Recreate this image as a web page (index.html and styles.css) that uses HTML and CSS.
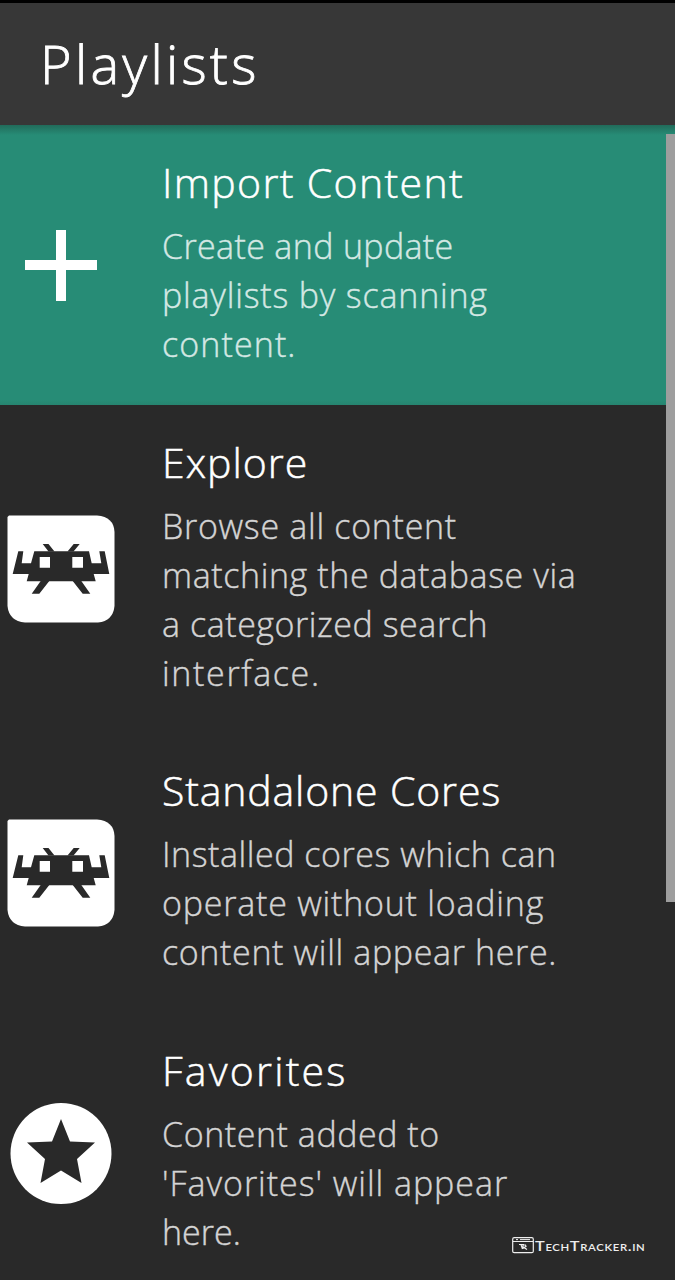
FILE: index.html
```
<!DOCTYPE html>
<html lang="en">
<head>
<meta charset="utf-8">
<title>Playlists</title>
<link rel="stylesheet" href="styles.css">
</head>
<body>
<svg width="0" height="0" class="defs">
  <symbol id="invader" viewBox="0 0 108 108">
    <path fill="#fff" d="M2 .5H90Q107 2 107.500 17V91Q106 106 91 107.500H18Q2 106 .5 91V2Z"/>
    <path fill="#292929" d="M27.300 36.300H82l2.700 12h9.600l-2-12h5.400l4.600 22.700H86.700l2 7.300h-69l2-7.300h-16l5.600-22.700h5l-1.600 12H24z"/>
    <path fill="#292929" d="M33.700 66h8.600l-10 12.700h-7.600zM65.700 66h8.600l9 12.700h-7.600zM35.700 29h5.800l6 7.600h-6zM66.700 29h6l-6.200 7.600h-6z"/>
    <path fill="#fff" d="M32.700 42H43v10.700H32.700zM65.300 42H76v10.700H65.300z"/>
  </symbol>
</svg>
<div class="screen">
  <header class="header"><h1>Playlists</h1></header>
  <main class="list">
    <section class="entry selected">
      <div class="icon"><svg width="72" height="72" viewBox="0 0 72 72"><path fill="#fff" d="M31 1h10v30h31v10H41v31H31V41H0V31h31z"/></svg></div>
      <div class="text">
        <h2 class="t1">Import Content</h2>
        <p><span class="a1">Create and update</span><span class="a2">playlists by scanning</span><span class="a3">content.</span></p>
      </div>
    </section>
    <section class="entry tall">
      <div class="icon"><svg width="108" height="108"><use href="#invader"/></svg></div>
      <div class="text">
        <h2 class="t2">Explore</h2>
        <p><span class="b1">Browse all content</span><span class="b2">matching the database via</span><span class="b3">a categorized search</span><span class="b4">interface.</span></p>
      </div>
    </section>
    <section class="entry">
      <div class="icon"><svg width="108" height="108"><use href="#invader"/></svg></div>
      <div class="text">
        <h2 class="t3">Standalone Cores</h2>
        <p><span class="c1">Installed cores which can</span><span class="c2">operate without loading</span><span class="c3">content will appear here.</span></p>
      </div>
    </section>
    <section class="entry">
      <div class="icon"><svg width="102" height="102" viewBox="0 0 102 102"><circle cx="51" cy="51.500" r="50.500" fill="#fff"/><path fill="#292929" d="M51 17l9 22.500 25 1-18 16.500 4.500 24L51 68.500 30.500 81 35 57 17 40.500l25-1z"/></svg></div>
      <div class="text">
        <h2 class="t4">Favorites</h2>
        <p><span class="d1">Content added to</span><span class="d2">'Favorites' will appear</span><span class="d3">here.</span></p>
      </div>
    </section>
  </main>
  <div class="scrollbar"></div>
  <div class="watermark">
    <svg width="22" height="17" viewBox="0 0 22 17" fill="none" stroke="#eee"><rect x=".7" y=".7" width="20.600" height="15" rx="1.500" stroke-width="1.200"/><path d="M1 4.500h20M4 2.600h2M8 2.600h10" stroke-width="1"/><path d="M7 7.500h5M9 7.500l1.500 4.500M11 12V8h2.500l.5 1.500-2 1 3 2" stroke-width="1.200"/></svg>
    <span>TechTracker.in</span>
  </div>
</div>
</body>
</html>
```
FILE: styles.css
```
* { box-sizing: border-box; margin: 0; padding: 0; }
body { background: #292929; font-family: "Open Sans", "Noto Sans", sans-serif; font-weight: 300; }
.defs { position: absolute; }
.screen { position: relative; width: 675px; height: 1280px; overflow: hidden; border-top: 3px solid #000; background: #292929; }
.header { height: 122px; padding: 22px 0 0 40px; background: #373737; }
h1 { font-size: 54px; line-height: 76px; font-weight: 300; letter-spacing: 3.300px; color: #fff; white-space: nowrap; -webkit-text-stroke: .8px #fff; }
.entry { display: flex; align-items: center; height: 280px; }
.entry.selected { background: linear-gradient(#216b5a 0, #278c76 10px, #278c76 275px, #268570 100%); }
.entry.tall { height: 328px; }
.icon { display: flex; flex: none; justify-content: center; width: 122px; }
.text { align-self: stretch; padding: 27px 0 0 40px; }
h2 { font-size: 41px; line-height: 60px; font-weight: 300; color: #fff; white-space: nowrap; -webkit-text-stroke: .5px currentColor; }
p { margin-top: 9.600px; font-size: 34px; line-height: 49.300px; color: #d4d4d4; -webkit-text-stroke: .4px currentColor; }
.selected p { color: #d4e8e4; }
p span { display: block; width: max-content; white-space: nowrap; }
.t1 { letter-spacing: 1.350px; }
.t2 { letter-spacing: 1px; }
.t3 { letter-spacing: .83px; }
.t4 { letter-spacing: 2.200px; }
.a1 { letter-spacing: .35px; }
.a2 { letter-spacing: .8px; }
.a3 { letter-spacing: 1.100px; }
.b1 { letter-spacing: .7px; }
.b2 { letter-spacing: .6px; }
.b3 { letter-spacing: .55px; }
.b4 { letter-spacing: 1.650px; }
.c1 { letter-spacing: .53px; }
.c2 { letter-spacing: .78px; }
.c3 { letter-spacing: .64px; }
.d1 { letter-spacing: .55px; }
.d2 { letter-spacing: .95px; }
.d3 { letter-spacing: 0; }
.scrollbar { position: absolute; top: 131px; right: 0; width: 9px; height: 768px; background: #9e9e9e; }
.watermark { position: absolute; left: 512px; top: 1233px; display: flex; align-items: center; gap: 1px; color: #eee; }
.watermark span { font: 600 13px/18px Lato, sans-serif; font-variant: small-caps; letter-spacing: .5px; white-space: nowrap; transform: scaleX(1.260) translateY(1px); transform-origin: left; }
```
